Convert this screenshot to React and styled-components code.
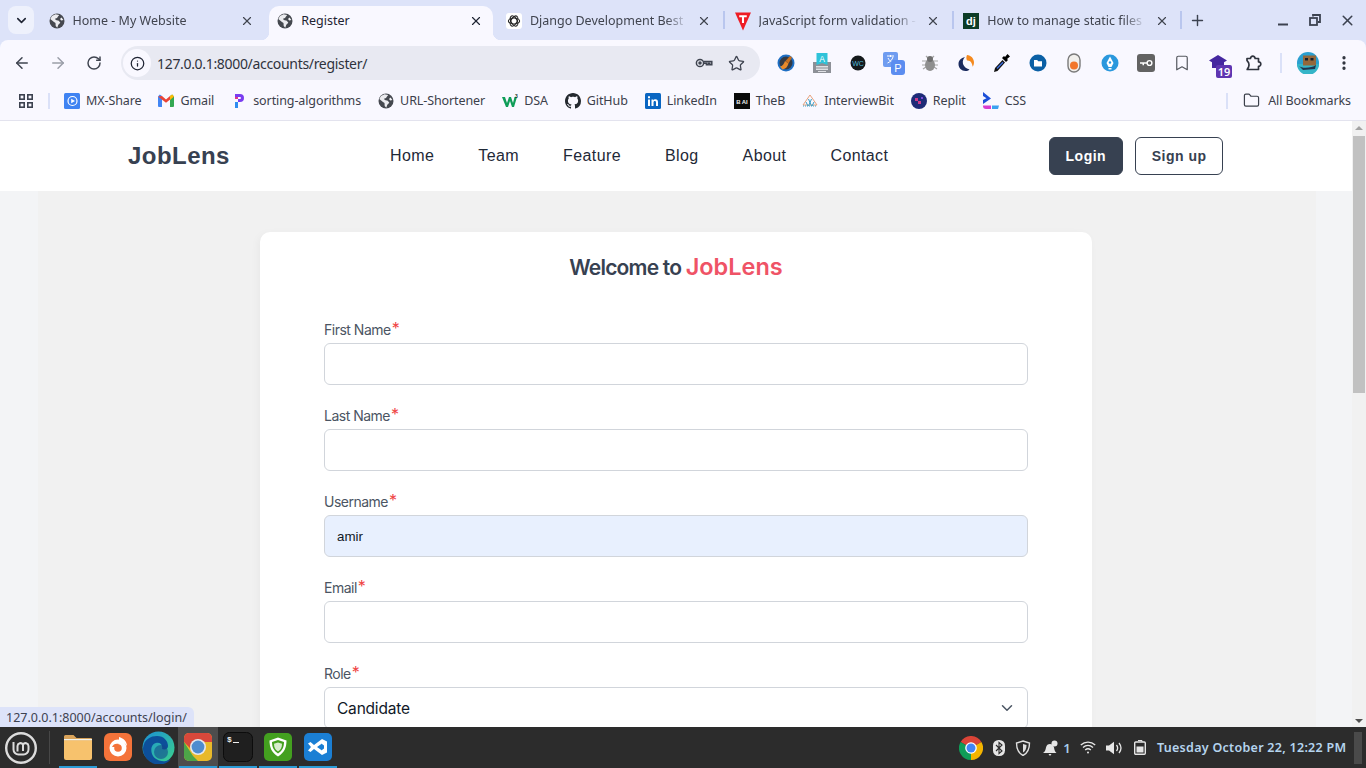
import React from "react";
import styled, { createGlobalStyle } from "styled-components";
import { ArrowLeft, ArrowRight, RotateCw, Star, Info, X, Plus, ChevronDown, Bookmark, Folder, EllipsisVertical } from "lucide-react";

const Global = createGlobalStyle`
html, body { margin: 0; padding: 0; overflow: hidden; }
* { box-sizing: border-box; }
body { font-family: "Noto Sans", sans-serif; }
`;

const Screen = styled.div`
width: 1366px;
height: 768px;
position: relative;
display: flex;
flex-direction: column;
overflow: hidden;
background: #dde3f9;
`;

/* browser chrome */
const TabStrip = styled.div`
height: 40px;
flex: none;
display: flex;
align-items: flex-start;
padding: 6px 0 0 8px;
background: #dde3f9;
`;

const TabSearch = styled.div`
width: 26px;
height: 28px;
margin-right: 6px;
flex: none;
border-radius: 8px;
background: #eef1fc;
display: flex;
align-items: center;
justify-content: center;
color: #1f2433;
`;

const Tab = styled.div`
width: 224.7px;
height: ${p => (p.$active ? "34px" : "28px")};
margin-right: 4px;
flex: none;
padding: ${p => (p.$active ? "1px 9.7px 6px 8.5px" : "1px 9.7px 0 8.5px")};
position: relative;
display: flex;
align-items: center;
gap: 8px;
border-radius: 10px 10px 0 0;
background: ${p => (p.$active ? "#f9f8ff" : "transparent")};

${p => p.$active && `
  &::before, &::after {
    content: "";
    position: absolute;
    bottom: 0;
    width: 8px;
    height: 8px;
  }
  &::before { left: -8px; background: radial-gradient(circle at 0 0, transparent 8px, #f9f8ff 8.5px); }
  &::after { right: -8px; background: radial-gradient(circle at 100% 0, transparent 8px, #f9f8ff 8.5px); }
`}

${p => p.$divider && `
  &::after {
    content: "";
    position: absolute;
    right: -3px;
    top: 5px;
    width: 2px;
    height: 18px;
    background: #b9c6ee;
  }
`}
`;

const TabFavicon = styled.span`
width: 16px;
height: 16px;
flex: none;
display: flex;
align-items: center;
justify-content: center;
`;

const TabTitle = styled.span`
flex: 1;
min-width: 0;
font-size: 12.5px;
line-height: 16px;
white-space: nowrap;
overflow: hidden;
color: ${p => (p.$active ? "#1f2433" : "#40444f")};
mask-image: ${p => (p.$active ? "none" : "linear-gradient(to right, #000 86%, transparent 100%)")};
`;

const TabClose = styled.span`
width: 16px;
height: 16px;
flex: none;
display: flex;
align-items: center;
justify-content: center;
color: ${p => (p.$active ? "#1f2433" : "#40444f")};
`;

const NewTab = styled.span`
width: 28px;
height: 28px;
flex: none;
display: flex;
align-items: center;
justify-content: center;
color: #3c4250;
`;

const WindowControls = styled.div`
margin-left: auto;
display: flex;
height: 28px;
align-items: center;
color: #3c4250;
padding-right: 3px;
`;

const WindowButton = styled.span`
width: 32px;
height: 28px;
display: flex;
align-items: center;
justify-content: center;
`;

const Toolbar = styled.div`
height: 40px;
flex: none;
display: flex;
align-items: center;
padding: 6px 6px 0 4px;
background: #f9f8ff;
border-radius: 8px 8px 0 0;
`;

const NavButton = styled.span`
width: 36px;
height: 34px;
flex: none;
display: flex;
align-items: center;
justify-content: center;
color: ${p => (p.$disabled ? "#9a9ea8" : "#3f4450")};
`;

const Omnibox = styled.div`
width: 639px;
height: 34px;
flex: none;
margin: 0 8px 0 9px;
padding: 0 8px 0 2px;
display: flex;
align-items: center;
border-radius: 17px;
background: #e8e9f2;
`;

const SiteChip = styled.span`
width: 28px;
height: 28px;
flex: none;
border-radius: 50%;
background: #f9f8ff;
display: flex;
align-items: center;
justify-content: center;
color: #1f2433;
`;

const UrlText = styled.span`
flex: 1;
margin-left: 6px;
font-size: 14px;
letter-spacing: -0.32px;
color: #2f333d;
`;

const OmniIcon = styled.span`
width: 32px;
height: 28px;
flex: none;
display: flex;
align-items: center;
justify-content: center;
color: #3f4450;
`;

const ExtensionSlot = styled.span`
width: 36px;
height: 34px;
flex: none;
position: relative;
display: flex;
align-items: center;
justify-content: center;
color: #2f333d;
`;

const ToolbarSep = styled.span`
width: 2px;
height: 20px;
margin: 0 8px;
flex: none;
background: #dbe1f8;
`;

const BookmarksBar = styled.div`
height: 41px;
flex: none;
display: flex;
align-items: center;
padding: 1px 15px 0 16px;
background: #f9f8ff;
border-bottom: 1px solid #e3e3ee;
`;

const AppsIcon = styled.span`
width: 20px;
height: 20px;
flex: none;
display: flex;
align-items: center;
justify-content: center;
`;

const BarSep = styled.span`
width: 2px;
height: 16px;
flex: none;
background: #dbe1f8;
margin: ${p => p.$margin};
`;

const BookmarkItem = styled.span`
display: flex;
align-items: center;
gap: 6px;
margin-right: 17px;
flex: none;
font-size: 12.5px;
line-height: 16px;
letter-spacing: -0.1px;
color: #3c404b;
white-space: nowrap;
`;

const BookmarkIcon = styled.span`
width: 16px;
height: 16px;
flex: none;
display: flex;
align-items: center;
justify-content: center;
`;

const AllBookmarks = styled.span`
margin-left: auto;
display: flex;
align-items: center;
gap: 8px;
font-size: 12.5px;
letter-spacing: -0.1px;
color: #3c404b;
white-space: nowrap;
`;

/* page */
const Viewport = styled.div`
flex: 1;
min-height: 0;
display: flex;
background: #f3f4f6;
`;

const Page = styled.div`
flex: 1;
min-width: 0;
overflow: hidden;
background: #f3f4f6;
`;

const SiteHeader = styled.header`
height: 70px;
display: flex;
align-items: center;
justify-content: space-between;
padding: 0 129px 0 128px;
background: #fff;
`;

const Logo = styled.div`
font-family: "Liberation Sans", Arial, sans-serif;
font-weight: 700;
font-size: 24px;
letter-spacing: 0.45px;
color: #374151;
`;

const SiteNav = styled.nav`
display: flex;
gap: 44px;
`;

const SiteLink = styled.a`
font-family: "Liberation Sans", Arial, sans-serif;
font-size: 16px;
letter-spacing: 0.4px;
color: #1f2937;
`;

const AuthGroup = styled.div`
display: flex;
gap: 12px;
`;

const AuthButton = styled.button`
height: 38px;
padding: 0 ${p => (p.$filled ? "16px" : "15.5px")};
font-family: "Liberation Sans", Arial, sans-serif;
font-weight: 700;
font-size: 14px;
letter-spacing: 0.5px;
border-radius: 6px;
border: 1px solid #374151;
background: ${p => (p.$filled ? "#374151" : "#fff")};
color: ${p => (p.$filled ? "#fff" : "#374151")};
`;

const Section = styled.section`
margin: 0 36px 0 38px;
padding: 41px 224px 0 222px;
background: #f1f1f1;
`;

const Card = styled.div`
height: 900px;
padding: 20px 64px 0;
border-radius: 10px;
background: #fff;
box-shadow: -2px 2px 8px rgba(0, 0, 0, 0.04);
`;

const Heading = styled.h2`
margin: 0 0 38px;
font-family: Inter, sans-serif;
font-weight: 600;
font-size: 21px;
line-height: 30px;
letter-spacing: -0.8px;
text-align: center;
color: #374151;
`;

const Accent = styled.span`
color: #ef5366;
font-weight: 600;
font-size: 23.5px;
letter-spacing: 0;
`;

const Field = styled.div`
margin-bottom: 22px;
`;

const Label = styled.label`
display: block;
height: 22px;
font-family: Inter, sans-serif;
font-size: 14px;
line-height: 18px;
letter-spacing: -0.5px;
color: #4b5563;
`;

const Required = styled.span`
color: #ef4444;
font-size: 16px;
letter-spacing: 0;
margin-left: 1px;
vertical-align: 1px;
line-height: 0;
`;

const TextInput = styled.input`
display: block;
width: 100%;
height: 42px;
padding: 0 12px;
font-family: "Liberation Sans", Arial, sans-serif;
font-size: 13.33px;
color: #111827;
border: 1px solid #d1d5db;
border-radius: 6px;
outline: none;
background: ${p => (p.$filled ? "#e8f0fe" : "#fff")};
`;

const SelectWrap = styled.div`
position: relative;
color: #4b5563;

svg {
  position: absolute;
  right: 12px;
  top: 12px;
}
`;

const RoleSelect = styled.select`
display: block;
width: 100%;
height: 42px;
padding: 0 12px;
font-family: Inter, sans-serif;
font-size: 15.5px;
letter-spacing: -0.2px;
color: #111827;
border: 1px solid #d1d5db;
border-radius: 6px;
outline: none;
appearance: none;
background: #fff;
`;

const Scrollbar = styled.div`
width: 14px;
flex: none;
position: relative;
padding: 15px 1px 0;
background: #f1f1f1;
`;

const ScrollThumb = styled.div`
height: 257px;
background: #c1c1c1;
`;

const ScrollArrow = styled.span`
position: absolute;
left: 3px;
${p => (p.$up ? "top: 5px;" : "bottom: 4px;")}
width: 0;
height: 0;
border-left: 4px solid transparent;
border-right: 4px solid transparent;
${p => (p.$up ? "border-bottom: 4px solid #a3a3a3;" : "border-top: 4px solid #505050;")}
`;

const StatusBubble = styled.div`
position: absolute;
left: 0;
bottom: 41px;
height: 20px;
padding: 0 7px 0 6px;
display: flex;
align-items: center;
font-size: 12.5px;
color: #3d4250;
background: #dde3f9;
border-top-right-radius: 6px;
`;

/* desktop panel */
const Taskbar = styled.div`
height: 41px;
flex: none;
display: flex;
align-items: stretch;
background: #2c2c2c;
color: #e6e6e6;
`;

const MenuButton = styled.span`
width: 50px;
flex: none;
padding-left: 4px;
display: flex;
align-items: center;
border-right: 1px solid #474747;
height: 33px;
align-self: center;
`;

const Launchers = styled.div`
display: flex;
padding-left: 8px;
`;

const Launcher = styled.span`
width: 40px;
padding-bottom: 1px;
display: flex;
align-items: center;
justify-content: center;
position: relative;
background: ${p => (p.$focused ? "#4d4d4d" : "transparent")};

${p => p.$running && `
  &::after {
    content: "";
    position: absolute;
    left: 1px;
    right: 1px;
    bottom: 0;
    height: 2px;
    background: #2b9bd6;
  }
`}
`;

const Tray = styled.div`
margin-left: auto;
display: flex;
align-items: center;
padding-right: 4px;
`;

const TraySlot = styled.span`
width: ${p => p.$w}px;
flex: none;
display: flex;
align-items: center;
justify-content: center;
font-size: 13px;
font-weight: 600;
color: #a9cdea;
`;

const Clock = styled.span`
margin-left: 1px;
width: 197px;
flex: none;
font-size: 12.5px;
font-weight: 600;
letter-spacing: 0.28px;
color: #b5d4ee;
white-space: nowrap;
`;

const PanelHandle = styled.span`
width: 8px;
height: 32px;
flex: none;
background: #4a4a4a;
`;

const Badge = styled.span`
position: absolute;
left: 16px;
top: 19px;
width: 16px;
height: 13px;
border-radius: 2px;
display: flex;
align-items: center;
justify-content: center;
background: #5e35b1;
color: #fff;
font-size: 11px;
font-weight: 600;
line-height: 1;
`;

/* drawings */
const Globe = () => (
  <svg width="16" height="16" viewBox="0 0 16 16">
    <circle cx="8" cy="8" r="7.5" fill="#45484f" />
    <path d="M6.5 1.200 3 3 1.300 6 5 9l1.500 1 .2 3 1.600 1.800 1-3 2-2-1.500-2-3-.8-.8-1.200 2-.8L9 3.500l1.200-1.500z" fill="#f4f4f8" opacity=".95" />
    <path d="M12.500 4.500 11 6l1.200 1.600 2.200-.6z" fill="#f4f4f8" />
  </svg>
);

const OpenAiMark = () => (
  <svg width="16" height="16" viewBox="0 0 16 16">
    <rect width="16" height="16" rx="3" fill="#fff" />
    <g fill="none" stroke="#222" strokeWidth="1.100">
      <ellipse cx="8" cy="8" rx="5.600" ry="3" />
      <ellipse cx="8" cy="8" rx="5.600" ry="3" transform="rotate(60 8 8)" />
      <ellipse cx="8" cy="8" rx="5.600" ry="3" transform="rotate(120 8 8)" />
    </g>
  </svg>
);

const TutorialMark = () => (
  <svg width="17" height="20" viewBox="0 0 17 20">
    <path d="M0 1h17L8.500 20z" fill="#ee1c25" />
    <path d="M4.500 4h8v2H9.600v6H7.400V6H4.500z" fill="#fff" />
  </svg>
);

const DjangoMark = () => (
  <svg width="16" height="16" viewBox="0 0 16 16">
    <rect width="16" height="16" fill="#0c3c26" />
    <text x="8" y="12" textAnchor="middle" fontFamily="Liberation Sans" fontWeight="700" fontSize="11" fill="#fff">dj</text>
  </svg>
);

const KeyIcon = () => (
  <svg width="20" height="20" viewBox="0 0 20 20" fill="none" stroke="currentColor" strokeWidth="1.500">
    <circle cx="6" cy="10" r="3.600" />
    <circle cx="6" cy="10" r="1" fill="currentColor" />
    <path d="M9.600 8.500h8.200v3.300h-2v-1.500h-1.600v1.500h-1.800v-1.500H9.600" />
  </svg>
);

const CleanerExt = () => (
  <svg width="18" height="18" viewBox="0 0 18 18">
    <circle cx="9" cy="9" r="8.500" fill="#1f6fc4" />
    <circle cx="9" cy="9" r="6.500" fill="#333a45" />
    <path d="M3 12.500c2.500-.2 4-2.600 5-5.500l3.500 2.500c-1 3.500-3 5.500-6 6z" fill="#e88a2b" />
    <path d="M8.500 7l4.500-5 2 1.500L11.500 9.500z" fill="#c96f1e" />
  </svg>
);

const KeyboardExt = () => (
  <svg width="18" height="20" viewBox="0 0 18 20">
    <path d="M0 9h18v11H0z" fill="#8d9097" />
    <path d="M3 13h12v1.400H3zM3 15.500h12v1.400H3zM5 18h8v1H5z" fill="#dfe0e4" />
    <path d="M3.500 0h11v12l-5.500-2-5.500 2z" fill="#2fc3d9" />
    <text x="9" y="8.500" textAnchor="middle" fontFamily="Liberation Sans" fontSize="8.500" fill="#fff">A</text>
  </svg>
);

const WcExt = () => (
  <svg width="16" height="16" viewBox="0 0 16 16">
    <circle cx="8" cy="8" r="7.500" fill="#15191c" />
    <text x="8" y="10.500" textAnchor="middle" fontFamily="Liberation Sans" fontSize="7" fill="#4fb6d8">WC</text>
  </svg>
);

const TranslateExt = () => (
  <svg width="22" height="24" viewBox="0 0 22 24">
    <rect x="0" y="1" width="15" height="15" rx="2" fill="#6f9cf0" />
    <path d="M4 5h7M7.500 4v2M10 6c-1 3-3 5-5.500 6M5 7c1 2.200 3 4 5.500 5" stroke="#fff" strokeWidth="1" fill="none" />
    <rect x="8" y="9" width="14" height="15" rx="3" fill="#5c8df0" />
    <text x="15" y="21" textAnchor="middle" fontFamily="Liberation Sans" fontSize="11" fill="#fff">P</text>
  </svg>
);

const BugExt = () => (
  <svg width="16" height="18" viewBox="0 0 16 18">
    <g stroke="#a7a7a7" strokeWidth="1.200">
      <path d="M0 7h16M0 11h16M1 15l3-2M15 15l-3-2M4 2l2 2M12 2l-2 2" />
    </g>
    <ellipse cx="8" cy="11" rx="5" ry="6" fill="#8f8f8f" />
    <circle cx="8" cy="5" r="3" fill="#6f6f6f" />
  </svg>
);

const SwirlExt = () => (
  <svg width="16" height="16" viewBox="0 0 16 16">
    <path d="M7 2C3 3 .5 5.500.5 9c0 4 3 7 7 7 1.500 0 3-.5 4-1.500C9 14 6 12 5 9c-.7-3 .5-5.500 2-7z" fill="#1a2a5e" />
    <path d="M9 0c4 .2 7 3.500 7 7.500 0 1.500-.5 3-1.300 4.200C14 8 12.500 5 9 5.500 8 3.500 8.300 1.500 9 0z" fill="#f58a1f" />
  </svg>
);

const DropperExt = () => (
  <svg width="18" height="20" viewBox="0 0 18 20">
    <path d="M1 19l1-4 7.500-8 2.500 2.500L4.500 18z" fill="#111" />
    <path d="M3.500 15l6-6.300 1 1-6 6.300z" fill="#3e6fe0" />
    <path d="M9 5l2-2 1 1 2.500-3L17 3.500l-3 2.500 1 1-2 2z" fill="#000" />
  </svg>
);

const FolderExt = () => (
  <svg width="18" height="18" viewBox="0 0 18 18">
    <circle cx="9" cy="9" r="8.500" fill="#0b60a5" />
    <path d="M5 6h3.200l1 1.200H13V12.500H5z" fill="#fff" />
  </svg>
);

const PillExt = () => (
  <svg width="14" height="20" viewBox="0 0 14 20">
    <rect x="1" y="1" width="12" height="18" rx="6" fill="#f1efec" stroke="#7a7a7a" strokeWidth="1.400" />
    <circle cx="7" cy="12.500" r="4" fill="#f2762b" />
  </svg>
);

const PenExt = () => (
  <svg width="18" height="18" viewBox="0 0 18 18">
    <circle cx="9" cy="9" r="8.500" fill="#2a98dd" />
    <path d="M9 2.500l3.500 6.500L10.500 13h-3L5.500 9z" fill="#fff" />
    <circle cx="9" cy="8.500" r="1.200" fill="#2a98dd" />
    <path d="M7.500 14h3v1.500h-3z" fill="#fff" />
  </svg>
);

const VaultExt = () => (
  <svg width="18" height="18" viewBox="0 0 18 18">
    <rect width="18" height="18" rx="3" fill="#636363" />
    <circle cx="12.500" cy="9" r="2.400" fill="none" stroke="#fff" strokeWidth="1.400" />
    <path d="M3 8.300h7v1.500H7v1.500H5.500V9.800H3z" fill="#fff" />
  </svg>
);

const CapExt = () => (
  <svg width="18" height="16" viewBox="0 0 18 16">
    <path d="M9 0l9 5.500-3 1.800V13H3V7.300L0 5.500z" fill="#4527a0" />
  </svg>
);

const PuzzleOutline = () => (
  <svg width="20" height="20" viewBox="0 0 20 20" fill="none" stroke="#2f333d" strokeWidth="1.700" strokeLinejoin="round">
    <path d="M3 5.500h3.500a2.300 2.300 0 1 1 4.600 0h3.400v3.300a2.300 2.300 0 1 1 0 4.600v3.100H3.200l1.400-2.500c.6-1.500.6-2.800 0-4.300L3 7.500z" />
  </svg>
);

const AvatarImage = () => (
  <svg width="22" height="22" viewBox="0 0 22 22">
    <circle cx="11" cy="11" r="11" fill="#2a9fd0" />
    <path d="M0 12a11 11 0 0 0 22 0z" fill="#35b5c8" />
    <rect x="6" y="3.500" width="13" height="10" fill="#93683c" />
    <rect x="8" y="6" width="3" height="2.500" fill="#16202c" />
    <rect x="13.500" y="6" width="3" height="2.500" fill="#16202c" />
    <path d="M2 14c3 3 13 2 17-1l-1 4-12 1z" fill="#1d3650" />
  </svg>
);

const AppsGrid = () => (
  <svg width="16" height="16" viewBox="0 0 16 16" fill="none" stroke="#3c4250" strokeWidth="1.600">
    <rect x="1.800" y="1.800" width="4.400" height="4.400" />
    <rect x="9.800" y="1.800" width="4.400" height="4.400" />
    <rect x="1.800" y="9.800" width="4.400" height="4.400" />
    <rect x="9.800" y="9.800" width="4.400" height="4.400" />
  </svg>
);

const MxShareMark = () => (
  <svg width="16" height="16" viewBox="0 0 16 16">
    <rect width="16" height="16" rx="1.500" fill="#3f83f2" />
    <circle cx="8.500" cy="8" r="4.500" fill="none" stroke="#fff" strokeWidth="1.200" />
    <path d="M7.200 5.800 11 8l-3.800 2.200z" fill="#fff" />
  </svg>
);

const GmailMark = () => (
  <svg width="16" height="13" viewBox="0 0 16 13">
    <path d="M0 2.500 1.800.6 4 2v11H1a1 1 0 0 1-1-1z" fill="#4285f4" />
    <path d="M16 2.500 14.200.6 12 2v11h3a1 1 0 0 0 1-1z" fill="#34a853" />
    <path d="M0 2.500 4 2l4 3.500L12 2l4 .5L8 8.800z" fill="#ea4335" />
    <path d="M12 2l2.200-1.400L16 2.500 12 6z" fill="#fbbc04" />
  </svg>
);

const AlgoMark = () => (
  <svg width="10" height="16" viewBox="0 0 10 16">
    <path d="M1 1h5a4 4 0 0 1 0 8H4V6h2a1 1 0 0 0 0-2H1z" fill="#7a3df0" />
    <path d="M1 4h3v2H1z" fill="#e0368a" />
    <path d="M1 9h3v6H1z" fill="#2f8cf0" />
  </svg>
);

const WMark = () => (
  <svg width="16" height="14" viewBox="0 0 16 14">
    <path d="M0 3h3l2 6 2-6h2l2 6 1.500-6H15l-3 10H10L8 7l-2 6H4z" fill="#0f9d58" />
    <text x="13" y="4" fontFamily="Liberation Sans" fontSize="5" fontWeight="700" fill="#1c3a2c">3</text>
  </svg>
);

const GithubMark = () => (
  <svg width="16" height="16" viewBox="0 0 16 16">
    <path fill="#24292f" d="M8 0C3.580 0 0 3.580 0 8c0 3.540 2.290 6.530 5.470 7.590.4.070.55-.17.55-.38 0-.19-.01-.82-.01-1.490-2.010.37-2.530-.49-2.690-.94-.09-.23-.48-.94-.82-1.130-.28-.15-.68-.52-.01-.53.63-.01 1.080.58 1.230.82.720 1.210 1.870.87 2.330.66.070-.52.280-.87.510-1.070-1.780-.2-3.640-.89-3.640-3.950 0-.87.310-1.590.820-2.150-.08-.2-.36-1.020.08-2.120 0 0 .67-.21 2.200.82.640-.18 1.320-.27 2-.27s1.360.09 2 .27c1.530-1.040 2.200-.82 2.200-.82.440 1.100.160 1.920.08 2.120.51.560.82 1.270.82 2.150 0 3.070-1.870 3.750-3.650 3.950.29.250.54.730.54 1.480 0 1.070-.01 1.930-.01 2.200 0 .21.150.460.550.38A8.010 8.010 0 0 0 16 8c0-4.420-3.580-8-8-8z" />
  </svg>
);

const LinkedinMark = () => (
  <svg width="16" height="16" viewBox="0 0 16 16">
    <rect width="16" height="16" rx="1.500" fill="#0a66c2" />
    <path d="M3 6.500h2V13H3zM3 3.200h2v2H3zM6.500 6.500h1.900v.9c.4-.6 1.100-1.100 2.100-1.100 1.800 0 2.500 1.100 2.500 2.900V13h-2V9.500c0-.9-.3-1.500-1.200-1.500-.9 0-1.300.6-1.300 1.500V13h-2z" fill="#fff" />
  </svg>
);

const TheBMark = () => (
  <svg width="16" height="16" viewBox="0 0 16 16">
    <rect width="16" height="16" fill="#0a0a0a" />
    <text x="8" y="10.500" textAnchor="middle" fontFamily="Liberation Sans" fontWeight="700" fontSize="6" fill="#eee">B AI</text>
  </svg>
);

const InterviewBitMark = () => (
  <svg width="16" height="14" viewBox="0 0 16 14">
    <path d="M8 1 1 11h14z" fill="none" stroke="#e8a27c" strokeWidth="1" />
    <path d="M4 8l2 4M6.500 5l3 7M9.500 5l-3 7M12 8l-2 4" stroke="#3aa0c8" strokeWidth="1" />
    <path d="M1 12h14" stroke="#3aa0c8" strokeWidth="1.200" strokeDasharray="1 1" />
  </svg>
);

const ReplitMark = () => (
  <svg width="16" height="16" viewBox="0 0 16 16">
    <circle cx="8" cy="8" r="8" fill="#1e2b78" />
    <path d="M4 5h3v3H4zM7 8h3v3H7z" fill="#c93a8d" />
    <path d="M10 4h2v2h-2z" fill="#7a4ad8" />
  </svg>
);

const CssMark = () => (
  <svg width="16" height="18" viewBox="0 0 16 18">
    <path d="M0 0l8 6.500L0 12V8l3.500-1.800L0 4z" fill="#1c4fd8" />
    <path d="M0 13.500h8V17H3a3 3 0 0 1-3-3z" fill="#d93cd0" />
    <path d="M9 13.500h7l-1 3.500H9z" fill="#3aa0f0" />
  </svg>
);

const MintLogo = () => (
  <svg width="34" height="34" viewBox="0 0 34 34" fill="none" stroke="#dcdcdc">
    <circle cx="17" cy="17" r="14.800" strokeWidth="2.400" />
    <path d="M9.500 11v7.500a5 5 0 0 0 5 5h5a5 5 0 0 0 5-5V15a3 3 0 0 0-5.500-1.500A3 3 0 0 0 13.500 15v5.500M19 13.500V20" strokeWidth="2" />
  </svg>
);

const FilesIcon = () => (
  <svg width="30" height="26" viewBox="0 0 30 26">
    <path d="M1 2.500A1.500 1.500 0 0 1 2.500 1h8l3 3H28a1 1 0 0 1 1 1v4H1z" fill="#d9a35a" />
    <path d="M1 5h28v1.500H1z" fill="#f2f2ea" />
    <path d="M1 6.500h28V24a2 2 0 0 1-2 2H3a2 2 0 0 1-2-2z" fill="#f7c26d" />
  </svg>
);

const FirefoxIcon = () => (
  <svg width="28" height="28" viewBox="0 0 28 28">
    <rect width="28" height="28" rx="6" fill="#f4733a" />
    <circle cx="14" cy="15" r="8.500" fill="#fff" />
    <circle cx="14" cy="15" r="3.800" fill="#f4733a" />
    <path d="M8 14c1-3 4-4 7-3l-3 3z" fill="#f4733a" />
    <path d="M15 4c4 1 8 4 8 9-2-3-4-5-8-5z" fill="#fff" />
  </svg>
);

const EdgeIcon = () => (
  <svg width="33" height="33" viewBox="0 0 33 33">
    <defs>
      <linearGradient id="edgeTop" x1="0" y1="0" x2="1" y2="1">
        <stop offset="0" stopColor="#1b8fd6" />
        <stop offset="1" stopColor="#3bd28a" />
      </linearGradient>
    </defs>
    <circle cx="16.500" cy="16.500" r="16" fill="url(#edgeTop)" />
    <path d="M1 17C2 8 9 5 15 5c7 0 11 5 11 10 0 3-3 4-6 3 1-4-2-7-6-6-5 1-6 8-3 13 2 3 7 6 13 5 2-.3 4-1.500 5-2.500-3 5-8 6-13 6C7 33 .5 25 1 17z" fill="#0d4f9a" />
    <circle cx="19" cy="21" r="7" fill="#134a8a" opacity=".6" />
  </svg>
);

const ChromeDockIcon = () => (
  <svg width="28" height="28" viewBox="0 0 28 28">
    <rect width="28" height="28" rx="5" fill="#e8b92a" />
    <path d="M0 5a5 5 0 0 1 5-5h18a5 5 0 0 1 5 5v4H14L6 15 0 9z" fill="#d9483b" />
    <path d="M0 9l9 14 5 5H5a5 5 0 0 1-5-5z" fill="#4da548" />
    <circle cx="14" cy="14" r="8" fill="#e6e8ec" />
    <circle cx="14" cy="14" r="6.400" fill="#4f8ccf" />
  </svg>
);

const TerminalIcon = () => (
  <svg width="30" height="30" viewBox="0 0 30 30">
    <rect x=".5" y=".5" width="29" height="29" rx="6" fill="#1f1f1f" stroke="#0c0c0c" />
    <text x="4" y="10" fontFamily="Liberation Mono" fontSize="8" fontWeight="700" fill="#eee">$</text>
    <path d="M10 10h6v1h-6z" fill="#eee" />
  </svg>
);

const GuardIcon = () => (
  <svg width="28" height="28" viewBox="0 0 28 28">
    <rect width="28" height="28" rx="5" fill="#43a01f" />
    <path d="M14 4.500l8.500 3c0 7-2 12-8.500 16C7.500 19.500 5.500 14.500 5.500 7.500z" fill="#fff" />
    <path d="M14 7l6 2c0 5-1.500 8.500-6 11.500C9.500 17.500 8 14 8 9z" fill="#43a01f" />
    <path d="M14 9.500l4 1.300c0 3.500-1 5.800-4 7.700-3-1.900-4-4.200-4-7.700z" fill="#d7eccd" />
  </svg>
);

const CodeIcon = () => (
  <svg width="28" height="28" viewBox="0 0 28 28">
    <rect width="28" height="28" rx="5" fill="#1b7fd4" />
    <path d="M18 6v16l-8-6-3.500 3L4 17.500 7 14 4 10.500 6.500 9l3.500 3zM18 10.500 13 14l5 3.500z" fill="#fff" fillRule="evenodd" />
    <path d="M18 6l5 2.500v11L18 22z" fill="#fff" />
    <path d="M18 11v6l2-1.500v-3z" fill="#1b7fd4" />
  </svg>
);

const ChromeTray = () => (
  <svg width="24" height="24" viewBox="0 0 24 24">
    <path d="M12 12 1.600 6A12 12 0 0 1 22.400 6z" fill="#db4437" />
    <path d="M12 12 22.400 6A12 12 0 0 1 12 24z" fill="#f4b400" />
    <path d="M12 12V24A12 12 0 0 1 1.600 6z" fill="#0f9d58" />
    <circle cx="12" cy="12" r="5.800" fill="#fff" />
    <circle cx="12" cy="12" r="4.500" fill="#4285f4" />
  </svg>
);

const BluetoothTray = () => (
  <svg width="12" height="16" viewBox="0 0 12 16">
    <rect width="12" height="16" rx="5.500" fill="#e6e6e6" />
    <path d="M3 5l6 6-3 2.500V2.500L9 5l-6 6" stroke="#2c2c2c" strokeWidth="1.100" fill="none" />
  </svg>
);

const ShieldTray = () => (
  <svg width="16" height="16" viewBox="0 0 16 16" fill="none" stroke="#e0e0e0">
    <path d="M8 1l6.500 2c0 6-1.500 10-6.500 12.500C3 13 1.500 9 1.500 3z" strokeWidth="1.400" />
    <path d="M8 4l3.500 1c0 3.500-1 6-3.500 7.500z" fill="#e0e0e0" stroke="none" />
  </svg>
);

const BellTray = () => (
  <svg width="17" height="16" viewBox="0 0 17 16">
    <path d="M1 13c2-1 2.500-3 3-5.500C4.500 5 6 4 8 4s3.500 1 4 3.500c.4 2.500 1 4.500 2.500 5.500z" fill="#e6e6e6" />
    <path d="M6.500 14h3L8 16z" fill="#e6e6e6" />
    <circle cx="12.500" cy="3.500" r="3" fill="#e6e6e6" />
  </svg>
);

const WifiTray = () => (
  <svg width="16" height="13" viewBox="0 0 16 13" fill="none" stroke="#e6e6e6" strokeWidth="1.400">
    <path d="M.8 4C5 .2 11 .2 15.200 4M3 6.500c3-2.700 7-2.700 10 0M5.200 9c1.700-1.500 3.900-1.500 5.600 0" />
    <circle cx="8" cy="11.500" r="1" fill="#e6e6e6" stroke="none" />
  </svg>
);

const VolumeTray = () => (
  <svg width="17" height="14" viewBox="0 0 17 14" fill="none">
    <path d="M0 4.500h3L8 .8v12.400l-5-3.700H0z" fill="#e6e6e6" />
    <path d="M10.500 4c1.300 1.700 1.300 4.300 0 6M13 2c2.400 3 2.400 7 0 10" stroke="#e6e6e6" strokeWidth="1.300" />
  </svg>
);

const BatteryTray = () => (
  <svg width="12" height="15" viewBox="0 0 12 15" fill="none">
    <path d="M4 .5h4v1.500" stroke="#e6e6e6" strokeWidth="1" />
    <rect x=".7" y="2" width="10.600" height="12.300" rx="1" stroke="#e6e6e6" strokeWidth="1.400" />
    <rect x="2.500" y="6.500" width="7" height="6" fill="#e6e6e6" />
  </svg>
);

const tabs = [
  { title: "Home - My Website", icon: <Globe /> },
  { title: "Register", icon: <Globe />, active: true },
  { title: "Django Development Best", icon: <OpenAiMark />, divider: true },
  { title: "JavaScript form validation -", icon: <TutorialMark />, divider: true },
  { title: "How to manage static files", icon: <DjangoMark />, divider: true },
];

const bookmarks = [
  { label: "MX-Share", icon: <MxShareMark /> },
  { label: "Gmail", icon: <GmailMark /> },
  { label: "sorting-algorithms", icon: <AlgoMark /> },
  { label: "URL-Shortener", icon: <Globe /> },
  { label: "DSA", icon: <WMark /> },
  { label: "GitHub", icon: <GithubMark /> },
  { label: "LinkedIn", icon: <LinkedinMark /> },
  { label: "TheB", icon: <TheBMark /> },
  { label: "InterviewBit", icon: <InterviewBitMark /> },
  { label: "Replit", icon: <ReplitMark /> },
  { label: "CSS", icon: <CssMark /> },
];

const extensions = [
  <CleanerExt />, <KeyboardExt />, <WcExt />, <TranslateExt />, <BugExt />, <SwirlExt />,
  <DropperExt />, <FolderExt />, <PillExt />, <PenExt />, <VaultExt />,
];

const navLinks = ["Home", "Team", "Feature", "Blog", "About", "Contact"];

const fields = [
  { label: "First Name", value: "" },
  { label: "Last Name", value: "" },
  { label: "Username", value: "amir" },
  { label: "Email", value: "" },
];

const App = () => {
  return (
    <Screen>
      <Global />
      <TabStrip>
        <TabSearch><ChevronDown size={15} strokeWidth={2.5} /></TabSearch>
        {tabs.map(tab => (
          <Tab key={tab.title} $active={tab.active} $divider={tab.divider}>
            <TabFavicon>{tab.icon}</TabFavicon>
            <TabTitle $active={tab.active}>{tab.title}</TabTitle>
            <TabClose $active={tab.active}><X size={14} strokeWidth={2} /></TabClose>
          </Tab>
        ))}
        <NewTab><Plus size={17} strokeWidth={2} /></NewTab>
        <WindowControls>
          <WindowButton>
            <svg width="12" height="12" viewBox="0 0 12 12" fill="none" stroke="currentColor" strokeWidth="2">
              <path d="M1 10.500h10" />
            </svg>
          </WindowButton>
          <WindowButton>
            <svg width="12" height="12" viewBox="0 0 12 12" fill="none" stroke="currentColor" strokeWidth="1.800">
              <rect x="1" y="4" width="7" height="7" />
              <path d="M4 2.500V1h7v7H9" />
            </svg>
          </WindowButton>
          <WindowButton><X size={17} strokeWidth={2.2} /></WindowButton>
        </WindowControls>
      </TabStrip>

      <Toolbar>
        <NavButton><ArrowLeft size={18} /></NavButton>
        <NavButton $disabled><ArrowRight size={18} /></NavButton>
        <NavButton><RotateCw size={16} strokeWidth={2.2} /></NavButton>
        <Omnibox>
          <SiteChip><Info size={15} strokeWidth={2} /></SiteChip>
          <UrlText>127.0.0.1:8000/accounts/register/</UrlText>
          <OmniIcon><KeyIcon /></OmniIcon>
          <OmniIcon><Star size={17} strokeWidth={1.8} /></OmniIcon>
        </Omnibox>
        {extensions.map((ext, i) => <ExtensionSlot key={i}>{ext}</ExtensionSlot>)}
        <ExtensionSlot><Bookmark size={18} strokeWidth={1.6} color="#55585f" /></ExtensionSlot>
        <ExtensionSlot><CapExt /><Badge>19</Badge></ExtensionSlot>
        <ExtensionSlot><PuzzleOutline /></ExtensionSlot>
        <ToolbarSep />
        <ExtensionSlot><AvatarImage /></ExtensionSlot>
        <ExtensionSlot><EllipsisVertical size={18} strokeWidth={2.4} /></ExtensionSlot>
      </Toolbar>

      <BookmarksBar>
        <AppsIcon><AppsGrid /></AppsIcon>
        <BarSep $margin="0 14px 0 12px" />
        {bookmarks.map(b => (
          <BookmarkItem key={b.label}>
            <BookmarkIcon>{b.icon}</BookmarkIcon>
            {b.label}
          </BookmarkItem>
        ))}
        <AllBookmarks>
          <BarSep $margin="0 7px 0 0" />
          <Folder size={17} strokeWidth={1.7} />
          All Bookmarks
        </AllBookmarks>
      </BookmarksBar>

      <Viewport>
        <Page>
          <SiteHeader>
            <Logo>JobLens</Logo>
            <SiteNav>
              {navLinks.map(link => <SiteLink key={link}>{link}</SiteLink>)}
            </SiteNav>
            <AuthGroup>
              <AuthButton $filled>Login</AuthButton>
              <AuthButton>Sign up</AuthButton>
            </AuthGroup>
          </SiteHeader>
          <Section>
            <Card>
              <Heading>Welcome to <Accent>JobLens</Accent></Heading>
              {fields.map(f => (
                <Field key={f.label}>
                  <Label>{f.label}<Required>*</Required></Label>
                  <TextInput $filled={!!f.value} defaultValue={f.value} />
                </Field>
              ))}
              <Field>
                <Label>Role<Required>*</Required></Label>
                <SelectWrap>
                  <RoleSelect defaultValue="Candidate">
                    <option>Candidate</option>
                    <option>Recruiter</option>
                  </RoleSelect>
                  <ChevronDown size={18} strokeWidth={2} />
                </SelectWrap>
              </Field>
            </Card>
          </Section>
        </Page>
        <Scrollbar>
          <ScrollArrow $up />
          <ScrollThumb />
          <ScrollArrow />
        </Scrollbar>
      </Viewport>

      <StatusBubble>127.0.0.1:8000/accounts/login/</StatusBubble>

      <Taskbar>
        <MenuButton><MintLogo /></MenuButton>
        <Launchers>
          <Launcher $running><FilesIcon /></Launcher>
          <Launcher><FirefoxIcon /></Launcher>
          <Launcher><EdgeIcon /></Launcher>
          <Launcher $running $focused><ChromeDockIcon /></Launcher>
          <Launcher $running><TerminalIcon /></Launcher>
          <Launcher $running><GuardIcon /></Launcher>
          <Launcher $running><CodeIcon /></Launcher>
        </Launchers>
        <Tray>
          <TraySlot $w={38}><ChromeTray /></TraySlot>
          <TraySlot $w={18}><BluetoothTray /></TraySlot>
          <TraySlot $w={30}><ShieldTray /></TraySlot>
          <TraySlot $w={24}><BellTray /></TraySlot>
          <TraySlot $w={10}>1</TraySlot>
          <TraySlot $w={32}><WifiTray /></TraySlot>
          <TraySlot $w={20}><VolumeTray /></TraySlot>
          <TraySlot $w={32}><BatteryTray /></TraySlot>
          <Clock>Tuesday October 22, 12:22 PM</Clock>
          <PanelHandle />
        </Tray>
      </Taskbar>
    </Screen>
  );
};

export default App;
